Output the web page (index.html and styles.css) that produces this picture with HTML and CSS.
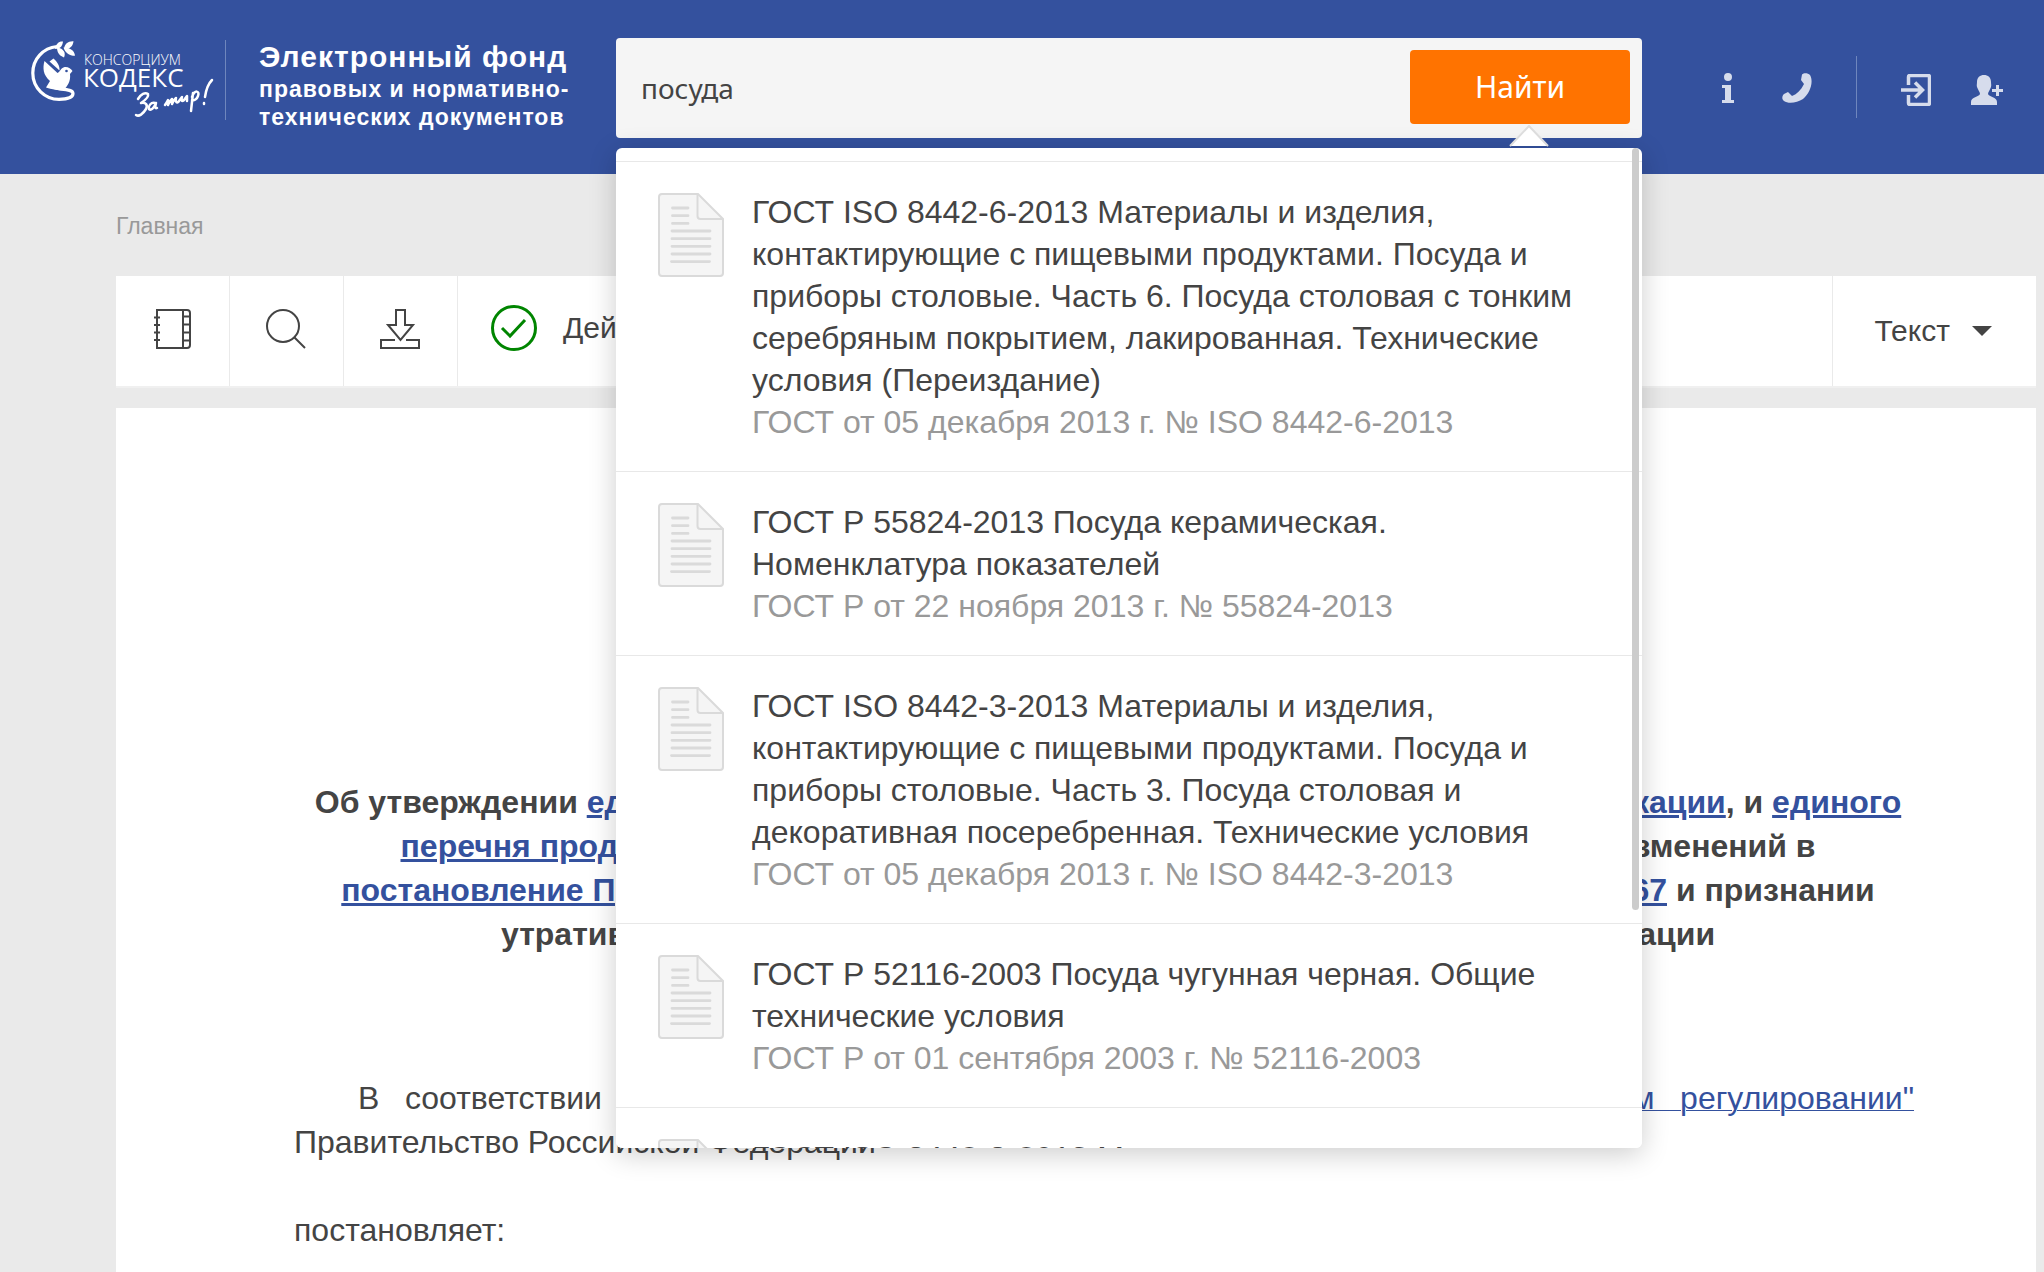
FILE: index.html
```html
<!DOCTYPE html>
<html lang="ru">
<head>
<meta charset="utf-8">
<meta name="viewport" content="width=device-width, initial-scale=1">
<title>Электронный фонд правовых и нормативно-технических документов</title>
<link rel="stylesheet" href="styles.css">
</head>
<body>
<svg class="sprite" aria-hidden="true">
  <symbol id="doc" viewBox="0 0 66 84">
    <path d="M4 1H40L65 26V80Q65 83 62 83H4Q1 83 1 80V4Q1 1 4 1Z" fill="#f5f5f5" stroke="#dadada" stroke-width="2"/>
    <path d="M39.500 1.500V23Q39.500 26 42.500 26H64.500" fill="none" stroke="#dadada" stroke-width="2"/>
    <path d="M14.500 15H30M14.500 22.700H30M14.500 30.400H30M14 38H52M14 45.700H52M14 53.300H52M14 61H52M13.500 68.600H51.500" fill="none" stroke="#dadada" stroke-width="2.800" stroke-linecap="round"/>
  </symbol>
</svg>

<header class="header">
  <a class="logo" href="#" aria-label="Консорциум Кодекс. За мир!">
    <svg width="188" height="84" viewBox="0 0 188 84">
      <path d="M27 6.500C13 8 2.800 19 2.800 33C2.800 48 15 59.300 29 59.300C38 59.300 43 57 43 53.500C43 50 37 49.700 30 49L18 46" fill="none" stroke="#fff" stroke-width="3.200"/>
      <g fill="#fff">
        <path d="M25 9C26 3.500 29 1 33 1.500C32.500 6 30.500 9 25 9Z"/>
        <path d="M34 9C34.500 4 38 1 43.500 1.300C43 6 40 9.500 34 9Z"/>
        <path d="M27 7.500C27 13 30 16 34 17.500C36 13 34 8.500 27 7.500Z"/>
        <path d="M33.500 7.500C35 12.500 39 15.800 45 15.800C44.500 10.500 40 7.500 33.500 7.500Z"/>
        <path d="M14.500 21L27.500 33C30 32 31 28 34 27.300C37.500 26.500 41 28.500 42.500 31L40 34C41 42 37 46 34 50C28 51 21 49 16 47.500L20 41C13 35 12.500 28 14.500 21Z"/>
        <path d="M19.500 21.500L23.500 18.500C27 21.500 30 26 29.500 30.500Z"/>
      </g>
      <circle cx="36.500" cy="31" r="1.300" fill="#34519e"/>
      <text class="logo-top" x="54" y="25">КОНСОРЦИУМ</text>
      <text class="logo-main" x="53" y="47">КОДЕКС</text>
      <g fill="none" stroke="#fff" stroke-width="2.500" stroke-linecap="round" stroke-linejoin="round">
        <path d="M108 59C111 54 115 52 118 54C119 57 114 61 111 63C116 62 118 65 116 69C113 74 109 77 106 75"/>
        <path d="M125 63C121 62 118 66 119 69C121 71 124 68 126 63C125 67 125 69 127 68"/>
        <path d="M135 65C137 62 138 60 138 60L138 65C139 62 141 60 142 59L142 64C143 61 145 59 146 58C145 62 147 64 149 61L152 57C151 61 152 62 154 60L157 56L157 61"/>
        <path d="M163 53L161 71M162 57C165 49 170 51 168 56C167 59 164 61 162 60"/>
        <path d="M182 40C178 44 176 50 175 57M174 63L174 64"/>
      </g>
    </svg>
  </a>
  <p class="title"><strong class="title-main">Электронный фонд</strong><span>правовых и нормативно-</span><span>технических документов</span></p>
  <form class="search" role="search" onsubmit="return false">
    <input class="search-input" type="text" value="посуда" aria-label="Поиск">
    <button class="search-button" type="submit">Найти</button>
    <div class="popup">
      <ul class="results">
        <li class="result"><svg class="result-icon"><use href="#doc"/></svg>
          <a class="result-link" href="#">ГОСТ ISO 8442-6-2013 Материалы и изделия, контактирующие с пищевыми продуктами. Посуда и приборы столовые. Часть 6. Посуда столовая с тонким серебряным покрытием, лакированная. Технические условия (Переиздание)<span class="result-meta">ГОСТ от 05 декабря 2013 г. № ISO 8442-6-2013</span></a></li>
        <li class="result"><svg class="result-icon"><use href="#doc"/></svg>
          <a class="result-link" href="#">ГОСТ Р 55824-2013 Посуда керамическая. Номенклатура показателей<span class="result-meta">ГОСТ Р от 22 ноября 2013 г. № 55824-2013</span></a></li>
        <li class="result"><svg class="result-icon"><use href="#doc"/></svg>
          <a class="result-link" href="#">ГОСТ ISO 8442-3-2013 Материалы и изделия, контактирующие с пищевыми продуктами. Посуда и приборы столовые. Часть 3. Посуда столовая и декоративная посеребренная. Технические условия<span class="result-meta">ГОСТ от 05 декабря 2013 г. № ISO 8442-3-2013</span></a></li>
        <li class="result"><svg class="result-icon"><use href="#doc"/></svg>
          <a class="result-link" href="#">ГОСТ Р 52116-2003 Посуда чугунная черная. Общие технические условия<span class="result-meta">ГОСТ Р от 01 сентября 2003 г. № 52116-2003</span></a></li>
        <li class="result"><svg class="result-icon"><use href="#doc"/></svg>
          <a class="result-link" href="#">ГОСТ ISO 8442-8-2013 Материалы и изделия</a></li>
      </ul>
      <span class="popup-scroll"></span>
    </div>
    <svg class="popup-arrow" width="40" height="22" viewBox="0 0 40 22"><path d="M1 21L20 1L39 21Z" fill="#fff"/><path d="M1 21L20 1L39 21" fill="none" stroke="#ddd" stroke-width="2"/></svg>
  </form>
  <nav class="tools" aria-label="Сервис">
    <div class="tools-help">
      <a class="tool tool-info" href="#" aria-label="Информация"><svg width="12" height="30" viewBox="0 0 12 30"><path d="M2 4a4 4 0 1 1 8 0a4 4 0 1 1-8 0ZM0 12H9V27H12V30H0V27H3V15H0Z"/></svg></a>
      <a class="tool" href="#" aria-label="Телефон"><svg width="30" height="30" viewBox="0 0 30 30"><path d="M20 1.500C22-.5 26 0 28 2C32 9 28 20 21 26C15 30 6 31 2 28C-.5 26 0 23 2 21L6 19L10 23C15 21 19 17 22 11L19 7Z"/></svg></a>
    </div>
    <div class="tools-user">
      <a class="tool" href="#" aria-label="Войти"><svg width="30" height="32" viewBox="0 0 30 32"><path d="M7.500 11V3Q7.500 1.500 9 1.500H27Q28.500 1.500 28.500 3V29Q28.500 30.500 27 30.500H9Q7.500 30.500 7.500 29V21M0 16H21M14 8.500L21.500 16L14 23.500" fill="none" stroke="#d6dcec" stroke-width="3.500"/></svg></a>
      <a class="tool" href="#" aria-label="Регистрация"><svg width="32" height="30" viewBox="0 0 32 30"><path d="M13 0C17 0 20 2.500 20 7C20 9 20.500 10 20 12C19 15 17 17 17 19C18 22 26 22 26 27V30H0V27C0 22 8 22 9 19C9 17 7 15 6 12C5.500 10 6 9 6 7C6 2.500 9 0 13 0ZM25 10H28V14H32V17H28V21H25V17H21V14H25Z"/></svg></a>
    </div>
  </nav>
</header>

<main class="page">
  <nav class="crumbs" aria-label="Навигация"><a href="#">Главная</a></nav>
  <div class="toolbar">
    <button class="bar-button" type="button" aria-label="Оглавление"><svg width="38" height="40" viewBox="0 0 38 40"><path d="M4 1H34Q37 1 37 4V36Q37 39 34 39H4ZM30 1V39M30 7.500H37M30 15.500H37M30 23.500H37M30 31.500H37M1 8.500H7M1 16H7M1 23.500H7M1 31H7"/></svg></button>
    <button class="bar-button" type="button" aria-label="Поиск по тексту"><svg width="40" height="40" viewBox="0 0 40 40"><circle cx="17" cy="17" r="16"/><path d="M28 28L39 39"/></svg></button>
    <button class="bar-button" type="button" aria-label="Скачать"><svg width="40" height="40" viewBox="0 0 40 40"><path d="M16 1H25V16H33L20.500 31L8 16H16ZM15 31H1V39H39V31H26"/></svg></button>
    <p class="status"><svg class="status-icon" width="46" height="46" viewBox="0 0 46 46"><circle cx="23" cy="23" r="21.500"/><path d="M11 23L19 31L34 15"/></svg>Действующий</p>
    <button class="view" type="button">Текст<svg width="20" height="10" viewBox="0 0 20 10"><path d="M0 0H20L10 10Z"/></svg></button>
  </div>
  <article class="doc">
    <h1 class="doc-title">Об утверждении <a href="#">единого перечня продукции, подлежащей обязательной сертификации</a>, и <a href="#">единого перечня продукции, подлежащей декларированию соответствия</a>, внесении изменений в <a href="#">постановление Правительства Российской Федерации от 31 декабря 2020 г. N 2467</a> и признании утратившими силу некоторых актов Правительства Российской Федерации</h1>
    <p class="doc-lead">В соответствии с пунктом 3 статьи 46 <a href="#">Федерального закона "О техническом регулировании"</a> Правительство Российской Федерации</p>
    <p class="doc-text">постановляет:</p>
  </article>
</main>
</body>
</html>
```

FILE: styles.css
```css
* { box-sizing: border-box; }

body {
  margin: 0;
  min-height: 100vh;
  display: flex;
  flex-direction: column;
  background: #eaeaea;
  color: #444;
  font: 32px/44px "Liberation Sans", Arial, sans-serif;
}

p, h1, ul { margin: 0; padding: 0; }
a { color: #34519e; }
button, input { border: 0; font: inherit; color: inherit; }

.sprite { position: absolute; width: 0; height: 0; }

/* Header */
.header {
  display: flex;
  align-items: flex-start;
  height: 174px;
  padding: 38px 41px 0 30px;
  background: #34519e;
}

.logo {
  flex: none;
  width: 196px;
  height: 80px;
  margin-top: 2px;
  border-right: 1px solid #6f86bd;
}
.logo svg { display: block; }
.logo-top { font: 300 14px "Open Sans", sans-serif; fill: #fff; }
.logo-main { font: 400 26px "Open Sans", sans-serif; fill: #fff; }

.title {
  display: flex;
  flex-direction: column;
  flex: none;
  width: 390px;
  padding: 1px 0 0 33px;
  color: #fff;
  font-size: 23px;
  font-weight: 700;
  line-height: 28px;
  letter-spacing: 1px;
}
.title-main { font-size: 30px; line-height: 36px; }

.search {
  position: relative;
  display: flex;
  flex: 0 1 1026px;
  height: 100px;
  padding: 12px 12px 14px 0;
  border-radius: 4px;
  background: #f5f5f5;
}
.search-input {
  flex: 1;
  min-width: 0;
  padding: 2px 25px 0;
  background: none;
  outline: none;
  font-family: "Noto Sans", sans-serif;
  font-size: 28px;
}
.search-button {
  width: 220px;
  border-radius: 4px;
  background: #ff7300;
  color: #fff;
  font-family: "Noto Sans", sans-serif;
  font-size: 30px;
}

/* Suggestions */
.popup {
  position: absolute;
  z-index: 2;
  top: 110px;
  left: 0;
  right: 0;
  height: 1000px;
  overflow: hidden;
  border-radius: 6px;
  background: #fff;
}
.search::after {
  content: "";
  position: absolute;
  z-index: 1;
  top: 110px;
  left: 0;
  right: 0;
  height: 1000px;
  border-radius: 6px;
  box-shadow: 0 6px 28px rgba(0, 0, 0, .2);
}
.popup-scroll {
  position: absolute;
  top: 0;
  right: 3px;
  width: 7px;
  height: 762px;
  border-radius: 4px;
  background: #ccc;
}
.popup-arrow { position: absolute; z-index: 3; top: 87px; right: 93px; }
.results { padding-top: 13px; list-style: none; }
.result {
  display: flex;
  align-items: flex-start;
  gap: 28px;
  padding: 29px 60px 28px 42px;
  border-top: 1px solid #e8e8e8;
}
.result-icon { flex: none; width: 66px; height: 84px; margin-top: 2px; }
.result-link { flex: 1; color: #444; line-height: 42px; text-decoration: none; }
.result-meta { display: block; color: #999; }

/* Header tools */
.tools { display: flex; flex: none; margin-left: auto; padding-top: 18px; }
.tools-help, .tools-user { display: flex; align-items: center; height: 62px; }
.tools-help { gap: 44px; padding: 2px 44px 0 0; }
.tools-user { gap: 40px; padding: 6px 0 0 44px; border-left: 1px solid #6f86bd; }
.tool { display: flex; fill: #d6dcec; }
.tool-info { padding: 0 4px; }

/* Page */
.page { flex: 1; display: flex; flex-direction: column; padding: 30px 8px 0 116px; }
.crumbs { height: 72px; font-size: 23px; }
.crumbs a { color: #999; text-decoration: none; }

.toolbar {
  display: flex;
  height: 112px;
  border-bottom: 2px solid #f0f0f0;
  background: #fff;
}
.bar-button {
  display: flex;
  align-items: center;
  justify-content: center;
  width: 114px;
  padding: 0 1px 4px 0;
  border-right: 1px solid #eaeaea;
  background: none;
}
.bar-button svg { fill: none; stroke: #444; stroke-width: 2; }
.status {
  display: flex;
  align-items: center;
  flex: 1;
  gap: 26px;
  padding: 0 0 6px 33px;
  font-size: 30px;
}
.status-icon { fill: none; stroke: #008500; stroke-width: 3; }
.view {
  display: flex;
  align-items: center;
  gap: 22px;
  padding: 0 44px 0 41px;
  border-left: 1px solid #eaeaea;
  background: none;
  font-size: 30px;
}
.view svg { fill: #444; }

.doc { flex: 1; margin-top: 20px; padding: 372px 122px 0 178px; background: #fff; }
.doc-title { padding-left: 8px; font-size: 32px; line-height: 44px; text-align: center; }
.doc-title a { text-decoration-thickness: 3px; }
.doc-lead { margin-top: 120px; text-align: justify; text-indent: 64px; }
.doc-lead a { text-decoration-thickness: 1px; }
.doc-text { margin-top: 44px; }
```
